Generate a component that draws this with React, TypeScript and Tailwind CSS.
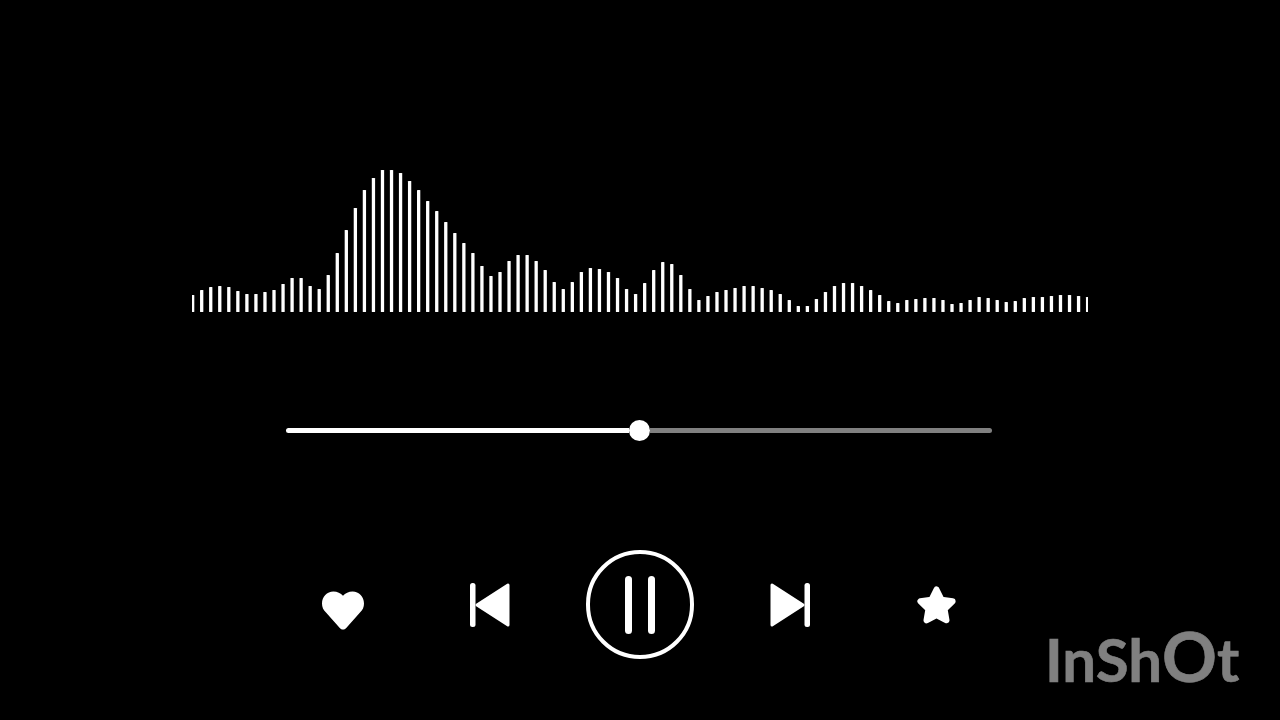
const BARS = [17,22,25,26,25,21,18,18,20,22,28,34,34,26,23,37,59,82,104,122,134,142,142,139,131,122,111,101,90,79,69,59,46,36,40,51,57,57,51,42,30,23,30,40,44,43,40,34,23,18,29,42,50,48,37,23,12,16,20,22,24,26,26,24,22,18,12,6,6,13,20,26,29,29,26,22,17,11,9,12,13,14,14,12,8,9,12,15,14,12,10,11,14,15,15,16,17,17,16,15];

function Waveform() {
  return (
    <svg width="896" height="142" viewBox="0 0 896 142" className="block">
      {BARS.map((h, i) => (
        <rect key={i} x={0.65 - 1.65 + i * 9.04} y={142 - h} width="3.3" height={h} rx="0.6" fill="#ffffff" />
      ))}
    </svg>
  );
}

function Heart() {
  return (
    <svg width="42" height="39" viewBox="0 0 42 39" className="mt-[12px]">
      <path
        d="M21 38.6c-1.2 0-2.2-.5-3-1.4L4 21.6C1.3 18.8 0 16 0 12.4 0 5.4 5 .4 11.4.4c3.900 0 7.300 1.600 9.600 4.300C23.300 2 26.700.4 30.600.4 37 .4 42 5.400 42 12.400c0 3.600-1.300 6.400-4 9.200L24 37.200c-.8.9-1.800 1.400-3 1.400z"
        fill="#ffffff"
      />
    </svg>
  );
}

function SkipBack() {
  return (
    <svg width="40" height="44" viewBox="0 0 40 44">
      <rect x="0" y="0" width="5.5" height="44" rx="2.5" fill="#ffffff" />
      <path d="M7 22 38 2v40z" fill="#ffffff" stroke="#ffffff" strokeWidth="3" strokeLinejoin="round" />
    </svg>
  );
}

function SkipNext() {
  return (
    <svg width="40" height="44" viewBox="0 0 40 44">
      <rect x="34.5" y="0" width="5.5" height="44" rx="2.5" fill="#ffffff" />
      <path d="M33 22 2 2v40z" fill="#ffffff" stroke="#ffffff" strokeWidth="3" strokeLinejoin="round" />
    </svg>
  );
}

function Star() {
  return (
    <svg width="40" height="38" viewBox="0 0 40 38">
      <path
        d="M19.500 3.500l5.100 10.300 11 1.500-8 7.900 1.900 11.100-10-5.300-10 5.300 1.900-11.100-8-7.900 11-1.500z"
        fill="#ffffff"
        stroke="#ffffff"
        strokeWidth="6"
        strokeLinejoin="round"
      />
    </svg>
  );
}

export default function App() {
  return (
    <div className="relative flex h-[720px] w-[1280px] flex-col items-center overflow-hidden bg-black pt-[170px]">
      <Waveform />

      <div className="mt-[108px] mr-[2px] flex h-[20px] w-[706px] items-center">
        <div className="h-[5px] w-[343px] rounded-l-full bg-white" />
        <div className="h-[21px] w-[21px] shrink-0 rounded-full bg-white" />
        <div className="h-[5px] flex-1 rounded-r-full bg-[#808080]" />
      </div>

      <div className="mt-[110px] mr-[1px] flex items-center">
        <Heart />
        <div className="ml-[106px]">
          <SkipBack />
        </div>
        <div className="ml-[76px] flex h-[109px] w-[108px] items-center justify-center gap-[16px] rounded-full border-4 border-white">
          <div className="h-[58px] w-[7px] rounded-full bg-white" />
          <div className="h-[58px] w-[7px] rounded-full bg-white" />
        </div>
        <div className="ml-[76px]">
          <SkipNext />
        </div>
        <div className="ml-[107px]">
          <Star />
        </div>
      </div>

      <div className="absolute left-[1045px] top-[620px] flex items-baseline font-['Lato',sans-serif] text-[60px] leading-[72px] font-bold text-[#808080] [-webkit-text-stroke:0.6px_#808080]">
        <span>InSh</span>
        <span className="text-[68px] leading-[72px]">O</span>
        <span>t</span>
      </div>
    </div>
  );
}
